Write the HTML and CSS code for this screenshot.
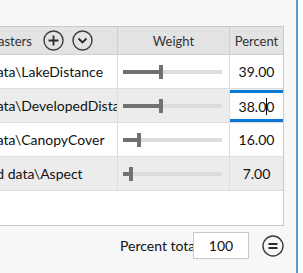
FILE: index.html
```html
<!DOCTYPE html>
<html>
<head>
<meta charset="utf-8">
<link rel="stylesheet" href="styles.css">
</head>
<body>
<div class="window">
  <div class="panel">
    <div class="grid">
      <div class="cell head c1">
        <span class="hlabel">Input rasters</span>
        <span class="circ"><svg width="21" height="21" viewBox="0 0 21 21"><circle cx="10.5" cy="10.5" r="9.5" fill="none" stroke="#3c3c3c" stroke-width="1.4"/><path d="M10.5 5.5v10M5.5 10.5h10" stroke="#2a2a2a" stroke-width="1.8"/></svg></span>
        <span class="circ"><svg width="21" height="21" viewBox="0 0 21 21"><circle cx="10.5" cy="10.5" r="9.5" fill="none" stroke="#3c3c3c" stroke-width="1.4"/><path d="M6.5 8.5l4 4 4-4" fill="none" stroke="#2a2a2a" stroke-width="1.8"/></svg></span>
      </div>
      <div class="cell head c2">Weight</div>
      <div class="cell head c3">Percent</div>

      <div class="cell c1 name">Raw data\LakeDistance</div>
      <div class="cell c2"><div class="slider"><div class="fill" style="width:36px"></div><div class="thumb" style="left:36px"></div></div></div>
      <div class="cell c3 num">39.00</div>

      <div class="cell c1 name alt">Raw data\DevelopedDistance</div>
      <div class="cell c2 alt"><div class="slider"><div class="fill" style="width:36px"></div><div class="thumb" style="left:36px"></div></div></div>
      <div class="cell c3 edit"><div class="editbox">38.0<span class="caret"></span>0</div></div>

      <div class="cell c1 name">Raw data\CanopyCover</div>
      <div class="cell c2"><div class="slider"><div class="fill" style="width:14px"></div><div class="thumb" style="left:14px"></div></div></div>
      <div class="cell c3 num">16.00</div>

      <div class="cell c1 name alt">Graded data\Aspect</div>
      <div class="cell c2 alt"><div class="slider"><div class="fill" style="width:6px"></div><div class="thumb" style="left:6px"></div></div></div>
      <div class="cell c3 num alt">7.00</div>
    </div>
    <div class="footer">
      <span class="flabel">Percent total</span>
      <span class="total">100</span>
      <span class="eq"><svg width="22" height="22" viewBox="0 0 22 22"><circle cx="11" cy="11" r="10" fill="none" stroke="#3c3c3c" stroke-width="1.4"/><path d="M6.5 9h9M6.5 13h9" stroke="#2a2a2a" stroke-width="1.8"/></svg></span>
    </div>
  </div>
  <div class="divider"></div>
  <div class="rest"></div>
</div>
</body>
</html>
```
FILE: styles.css
```css
* { box-sizing: border-box; }
html, body { margin: 0; padding: 0; overflow: hidden; }
body {
  font-family: Lato, "Noto Sans", sans-serif;
  color: #111;
  background: #fff;
}
.window {
  display: flex;
  width: 303px;
  height: 273px;
}
.panel {
  width: 296px;
  flex: none;
  background: #f7f7f7;
  padding-top: 26px;
  overflow: hidden;
}
.divider {
  width: 2px;
  flex: none;
  background: #5b9bd5;
}
.rest { flex: 1; background: #fff; }

.grid {
  display: grid;
  grid-template-columns: 158px 112px 53px;
  grid-template-rows: 28px repeat(4, 34px);
  align-content: start;
  width: 325px;
  height: 200px;
  margin-left: -41px;
  border: 1px solid #c9c9c9;
  background: #fff;
}
.cell {
  border-bottom: 1px solid #dedede;
  border-right: 1px solid #dedede;
  display: flex;
  align-items: center;
  overflow: hidden;
  white-space: nowrap;
  font-size: 14px;
  background: #fff;
}
.c3 { border-right: none; }
.alt { background: #ececec; }
.head {
  background: #e3e3e3;
  border-bottom-color: #cfcfcf;
  border-right-color: #cfcfcf;
  font-size: 13px;
  color: #333;
}
.head.c2, .head.c3 { justify-content: center; }
.head.c1 { padding-left: 0; }
.hlabel { margin-right: 11px; }
.circ { display: flex; margin-right: 8px; }
.name { padding-left: 0; text-indent: -1px; }
.num { justify-content: center; }

.slider {
  position: relative;
  margin: 0 6px 0 5px;
  height: 4px;
  width: 99px;
  background: #dcdcdc;
  text-indent: 0;
}
.fill {
  position: absolute;
  left: 0; top: 0;
  height: 4px;
  background: #717171;
}
.thumb {
  position: absolute;
  top: -5px;
  width: 4px;
  height: 14px;
  background: #717171;
}

.edit { background: #ececec; align-items: flex-start; }
.editbox {
  margin-top: 1px;
  width: 100%;
  height: 32px;
  background: #fff;
  border-top: 3px solid #0a78d7;
  border-bottom: 3px solid #0a78d7;
  display: flex;
  align-items: center;
  justify-content: center;
}
.caret {
  display: inline-block;
  width: 1px;
  height: 17px;
  background: #000;
  margin-right: -1px;
}

.footer {
  display: flex;
  align-items: center;
  justify-content: flex-end;
  padding: 6px 12px 0 0;
}
.flabel {
  width: 73px;
  overflow: hidden;
  white-space: nowrap;
  font-size: 14px;
}
.total {
  width: 56px;
  height: 27px;
  border: 1px solid #c8c8c8;
  background: #fff;
  display: flex;
  align-items: center;
  justify-content: center;
  font-size: 14px;
  margin-right: 13px;
}
.eq { display: flex; }
```
